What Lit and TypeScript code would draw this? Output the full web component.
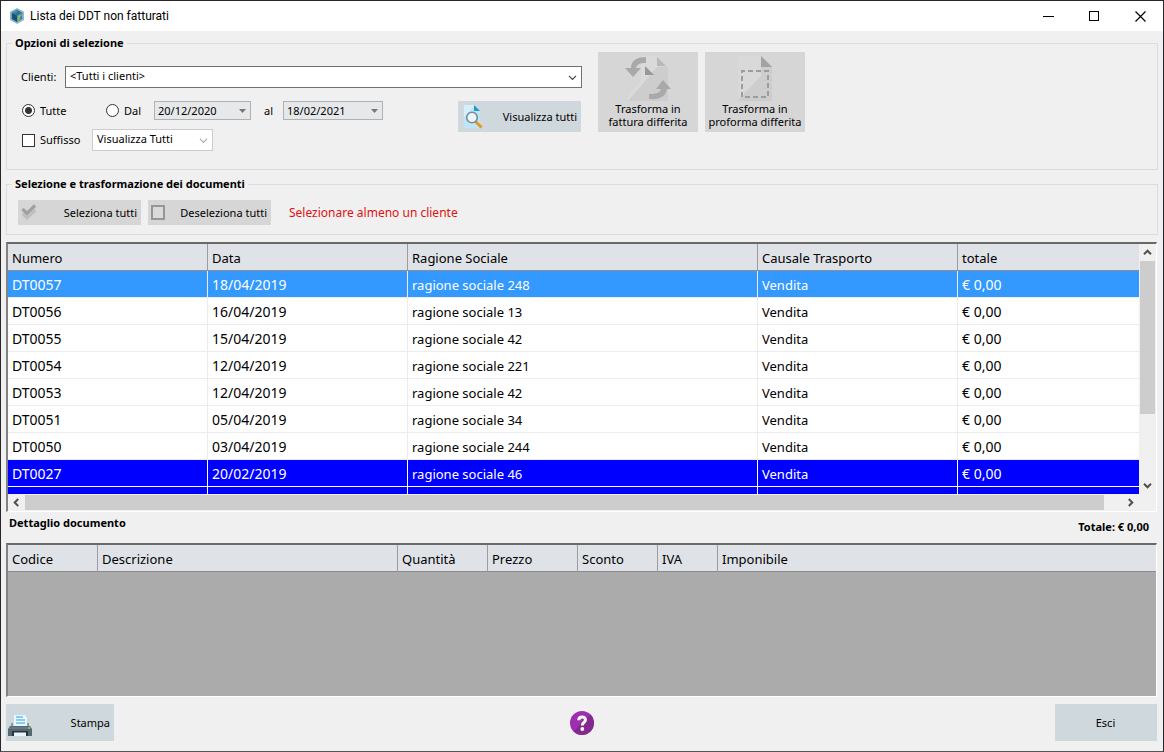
import { LitElement, html, css, svg } from "lit";
import { customElement, property } from "lit/decorators.js";
import { classMap } from "lit/directives/class-map.js";

interface Ddt {
  numero: string;
  data: string;
  ragione: string;
  state?: "current" | "marked";
}

const DOCUMENTS: Ddt[] = [
  { numero: "DT0057", data: "18/04/2019", ragione: "ragione sociale 248", state: "current" },
  { numero: "DT0056", data: "16/04/2019", ragione: "ragione sociale 13" },
  { numero: "DT0055", data: "15/04/2019", ragione: "ragione sociale 42" },
  { numero: "DT0054", data: "12/04/2019", ragione: "ragione sociale 221" },
  { numero: "DT0053", data: "12/04/2019", ragione: "ragione sociale 42" },
  { numero: "DT0051", data: "05/04/2019", ragione: "ragione sociale 34" },
  { numero: "DT0050", data: "03/04/2019", ragione: "ragione sociale 244" },
  { numero: "DT0027", data: "20/02/2019", ragione: "ragione sociale 46", state: "marked" },
];

const chevron = (d: string, color = "#505050", width = 2) => svg`
  <svg width="9" height="9" viewBox="0 0 9 9" fill="none" aria-hidden="true">
    <path d=${d} stroke=${color} stroke-width=${width} />
  </svg>`;

const UP = "M1 6.2 4.5 2.7 8 6.2";
const DOWN = "M1 2.8 4.5 6.3 8 2.8";
const LEFT = "M6.2 1 2.7 4.5 6.2 8";
const RIGHT = "M2.8 1 6.3 4.5 2.8 8";

const appIcon = svg`
  <svg width="14" height="16" viewBox="0 0 14 16" aria-hidden="true">
    <path d="M7 0 14 3.8V12L7 16 0 12V3.8Z" fill="#8fb9c4" />
    <path d="M7 1.8 12.2 4.7 7 7.6 1.8 4.7Z" fill="#2d6f9a" />
    <path d="M1.8 4.7 7 7.6V14L1.8 11Z" fill="#17507d" />
    <path d="M12.2 4.7 7 7.6V14L12.2 11Z" fill="#3b86a5" />
    <path d="M7.6 8.2 11.4 6.2V8L9.6 9V12L7.6 13Z" fill="#a5b95a" />
    <path d="M3 3.8 7 2 8 4 4 6Z" fill="#3f8fb5" />
  </svg>`;

const searchIcon = svg`
  <svg width="20" height="24" viewBox="0 0 20 24" aria-hidden="true">
    <path d="M1 0H11L17 6V23H1Z" fill="#bfe6f8" />
    <path d="M1 23V12L11 1V0H1Z" fill="#d3f0fb" />
    <path d="M11 0 17 6H11Z" fill="#1f9dc4" />
    <path d="m12.5 16.5 6 6" stroke="#e39a20" stroke-width="3" />
    <circle cx="9" cy="12.500" r="5.300" fill="#eaf6fb" stroke="#7a8b95" stroke-width="1.600" />
  </svg>`;

const transformIcon = svg`
  <svg width="48" height="48" viewBox="0 0 48 48" aria-hidden="true">
    <path d="M17 2H33V13H44V47H4V42L17 28Z" fill="#cdcdcd" />
    <path d="M4 47V42L17 26V2H33V13Z" fill="#dadada" />
    <path d="M33 3 42 12H33Z" fill="#b8b8b8" />
    <path d="M21 12 30 21H21Z" fill="#989898" />
    <path d="M22 3C12 3 7 7 7 14H1L9 23 17 14H12C13 10 16 9 22 9Z" fill="#a9a9a9" />
    <path d="M25 45C36 46 42 42 43 35H47L39 26 32 35H37C36 39 32 40 25 40Z" fill="#a9a9a9" />
  </svg>`;

const proformaIcon = svg`
  <svg width="48" height="48" viewBox="0 0 48 48" aria-hidden="true">
    <path d="M7 2H30L41 13V47H7Z" fill="#cdcdcd" />
    <path d="M7 47V46L30 22V2H7Z" fill="#d9d9d9" />
    <path d="M30 2 41 13H30Z" fill="#a2a2a2" />
    <rect x="11" y="17" width="26" height="26" fill="none" stroke="#9c9c9c" stroke-width="2" stroke-dasharray="5 3" stroke-dashoffset="2" />
  </svg>`;

const checksIcon = svg`
  <svg width="16" height="17" viewBox="0 0 16 17" fill="none" aria-hidden="true">
    <path d="M1.500 9.500 6 14 14.500 6" stroke="#bebebe" stroke-width="3" />
    <path d="M1.500 5 6 9.500 14 1.500" stroke="#a0a0a0" stroke-width="3.200" />
  </svg>`;

const emptyBoxIcon = svg`
  <svg width="14" height="15" viewBox="0 0 14 15" aria-hidden="true">
    <rect x="1" y="1" width="12" height="13" fill="#dadada" stroke="#969696" stroke-width="2" />
  </svg>`;

const printerIcon = svg`
  <svg width="24" height="22" viewBox="0 0 24 22" aria-hidden="true">
    <path d="M6 0H17L19 3V13H6Z" fill="#e8f6fd" />
    <path d="M8 2H15M8 5H17M8 8H17" stroke="#6cc0e2" stroke-width="1.400" />
    <path d="M3 8H5V12H19V8H21V13H3Z" fill="#8b99a0" />
    <path d="M0 14 2 11H22L24 14V21H0Z" fill="#566872" />
    <path d="M1 13H23" stroke="#71828b" stroke-width="1.400" />
    <path d="M20 13H22" stroke="#93b94a" stroke-width="2" />
    <path d="M4 16H20V21H4Z" fill="#26343c" />
    <path d="M6 17.500H18V21H6Z" fill="#e9f5fa" />
  </svg>`;

const helpIcon = svg`
  <svg width="24" height="24" viewBox="0 0 24 24" aria-hidden="true">
    <circle cx="12" cy="12" r="12" fill="#9c2fae" />
    <path d="M20.500 3.500A12 12 0 0 1 3.500 20.500Z" fill="#84288f" />
    <path d="M8.700 9.200C8.700 4.900 15.500 5 15.500 8.800 15.500 11.500 12.300 11.500 12.300 14.500" fill="none" stroke="#fff" stroke-width="3" />
    <circle cx="12.300" cy="18" r="1.900" fill="#fff" />
  </svg>`;

@customElement("data-grid")
class DataGrid extends LitElement {
  @property({ type: Boolean, reflect: true }) scroll = false;

  static styles = css`
    :host {
      display: grid;
      grid-template: minmax(0, 1fr) / minmax(0, 1fr);
      box-sizing: border-box;
      min-height: 0;
      overflow: hidden;
      border: 1px solid #fff;
      border-top: 2px solid #696969;
      border-left: 2px solid #828282;
      background: #ababab;
    }
    :host([scroll]) {
      grid-template: minmax(0, 1fr) 17px / minmax(0, 1fr) 17px;
      background: #f0f0f0;
    }
    .view {
      overflow: hidden;
    }
    .bar {
      display: flex;
      background: #f0f0f0;
    }
    .vertical {
      flex-direction: column;
    }
    .arrow {
      flex: none;
      display: grid;
      place-items: center;
      width: 17px;
      height: 17px;
      padding: 0;
      border: 0;
      background: none;
    }
    .track {
      flex: 1;
    }
    .thumb {
      background: #cdcdcd;
    }
    .vertical .thumb {
      height: 71%;
      margin-left: 1px;
      margin-right: 1px;
    }
    .horizontal .thumb {
      height: 15px;
      margin-top: 1px;
      margin-right: 18px;
    }
  `;

  render() {
    return html`
      <div class="view"><slot></slot></div>
      ${this.scroll
        ? html`
            <div class="bar vertical">
              <button class="arrow" aria-label="Su">${chevron(UP)}</button>
              <div class="track"><div class="thumb"></div></div>
              <button class="arrow" aria-label="Giù">${chevron(DOWN)}</button>
            </div>
            <div class="bar horizontal">
              <button class="arrow" aria-label="Sinistra">${chevron(LEFT)}</button>
              <div class="track"><div class="thumb"></div></div>
              <button class="arrow" aria-label="Destra">${chevron(RIGHT)}</button>
            </div>
          `
        : ""}
    `;
  }
}

@customElement("app-root")
class AppRoot extends LitElement {
  static styles = css`
    :host {
      display: flex;
      flex-direction: column;
      box-sizing: border-box;
      height: 100vh;
      border: 1px solid #26262c;
      border-bottom-color: #555;
      background: #f0f0f0;
      color: #000;
      font: 11px/14px "Noto Sans", sans-serif;
    }
    button,
    select,
    input {
      font: inherit;
      color: inherit;
    }
    .titlebar {
      flex: none;
      display: flex;
      align-items: center;
      height: 30px;
      padding-left: 9px;
      background: #fff;
    }
    .title {
      flex: 1;
      margin: 0 0 0 6px;
      font: 12px/16px Roboto, sans-serif;
    }
    .caption {
      display: grid;
      place-items: center;
      width: 46px;
      height: 30px;
      padding: 0;
      border: 0;
      background: none;
    }
    .group {
      flex: none;
      box-sizing: border-box;
      margin: 5px 5px 0;
      padding: 0;
      border: 1px solid #dcdcdc;
      min-width: 0;
    }
    .group + .group {
      margin-top: 7px;
    }
    .group legend {
      margin-left: 5px;
      padding: 0 3px;
      font-weight: 700;
    }
    .options {
      display: flex;
      align-items: flex-start;
      gap: 7px;
      height: 117px;
      padding-top: 2px;
    }
    .filters {
      display: grid;
      gap: 13px;
      box-sizing: content-box;
      width: 561px;
      padding: 14px 9px 0 14px;
    }
    .client {
      display: flex;
      align-items: center;
    }
    .client label {
      width: 44px;
    }
    .combo {
      appearance: none;
      box-sizing: border-box;
      flex: 1;
      height: 22px;
      margin: 0;
      padding: 0 4px 2px;
      border: 1px solid #707070;
      border-radius: 0;
      background: #fff;
    }
    .stack {
      display: grid;
      align-items: center;
    }
    .stack > * {
      grid-area: 1 / 1;
    }
    .client .stack {
      flex: 1;
    }
    .stack svg {
      justify-self: end;
      margin-right: 5px;
      pointer-events: none;
    }
    .criteria {
      display: flex;
      justify-content: space-between;
      align-items: flex-start;
      padding: 0 1px;
    }
    .criteria-rows {
      display: grid;
      gap: 9px;
    }
    .row {
      display: flex;
      align-items: center;
    }
    .choice {
      display: flex;
      align-items: center;
      gap: 5px;
    }
    .choice input {
      appearance: none;
      box-sizing: border-box;
      flex: none;
      width: 13px;
      height: 13px;
      margin: 0;
      border: 1px solid #333;
      background: #fff;
    }
    .choice input[type="radio"] {
      border-radius: 50%;
    }
    .choice input[type="radio"]:checked {
      background: radial-gradient(circle, #333 3px, #fff 4px);
    }
    .all {
      width: 84px;
    }
    .from {
      width: 48px;
    }
    .date {
      box-sizing: border-box;
      width: 97px;
      height: 19px;
      margin: 0;
      padding: 0 3px;
      border: 1px solid #adb2b5;
      border-radius: 0;
      background: #e6e8ea;
    }
    .date-to {
      width: 100px;
    }
    .to {
      padding: 0 10px 0 13px;
    }
    .suffix {
      width: 70px;
    }
    .suffix-combo {
      width: 121px;
      border-color: #ccc;
    }
    .tool {
      display: flex;
      align-items: center;
      justify-content: space-between;
      box-sizing: border-box;
      width: 123px;
      height: 25px;
      padding: 0 4px 0 3px;
      border: 0;
      background: #d6d6d6;
    }
    .view-all {
      height: 31px;
      padding-left: 5px;
    }
    .active {
      background: #cfd8dc;
    }
    .big {
      display: flex;
      flex-direction: column;
      align-items: center;
      width: 100px;
      height: 80px;
      padding: 2px 0 0;
      border: 0;
      background: #d6d6d6;
      line-height: 13px;
    }
    .selection {
      display: flex;
      align-items: center;
      gap: 7px;
      height: 43px;
      padding-left: 11px;
    }
    .warning {
      margin: 0 0 0 11px;
      color: #e01010;
      font-size: 12px;
    }
    .documents {
      flex: 271 1 0;
      margin: 7px 6px 0 5px;
    }
    .detail-head {
      flex: none;
      display: flex;
      justify-content: space-between;
      align-items: center;
      height: 31px;
      padding: 0 14px 0 8px;
      font-weight: 700;
    }
    .heading {
      margin: 0 0 8px;
      font: inherit;
    }
    .detail {
      flex: 154 1 0;
      margin: 0 6px 0 5px;
    }
    table {
      width: 100%;
      table-layout: fixed;
      border-collapse: separate;
      border-spacing: 0;
      font-size: 13px;
      line-height: 18px;
    }
    th,
    td {
      box-sizing: border-box;
      height: 27px;
      padding: 2px 4px 0;
      overflow: hidden;
      text-align: left;
      white-space: nowrap;
      font-weight: 400;
      border-right: 1px solid #ececec;
      border-bottom: 1px solid #ececec;
    }
    th {
      background: #dfe3e8;
      border-right-color: #9a9ea3;
      border-bottom-color: #8c8c8c;
    }
    th:last-child,
    td:last-child {
      border-right: 0;
    }
    td {
      background: #fff;
    }
    .figure {
      font-size: 14px;
    }
    .current td {
      background: #3399ff;
      color: #fff;
    }
    .marked td {
      background: #0000ff;
      color: #fff;
      border-color: #fff;
    }
    .w-code,
    .w-num {
      width: 90px;
    }
    .w-desc {
      width: 300px;
    }
    .w-discount {
      width: 80px;
    }
    .w-vat {
      width: 60px;
    }
    .w-text {
      width: 200px;
    }
    .w-name {
      width: 350px;
    }
    .footer {
      flex: none;
      display: grid;
      grid-template-columns: 1fr auto 1fr;
      align-items: center;
      padding: 7px 6px 10px 5px;
    }
    .print {
      width: 108px;
      height: 37px;
      padding: 0 4px 0 2px;
    }
    .print svg {
      margin-top: 6px;
    }
    .help {
      display: flex;
      padding: 0;
      border: 0;
      background: none;
    }
    .exit {
      justify-self: end;
      justify-content: center;
      width: 102px;
      height: 37px;
    }
  `;

  private documentRow(d: Ddt) {
    const classes = classMap({ current: d.state === "current", marked: d.state === "marked" });
    return html`<tr class=${classes}>
      <td class="figure">${d.numero}</td>
      <td class="figure">${d.data}</td>
      <td>${d.ragione}</td>
      <td>Vendita</td>
      <td class="figure">€ 0,00</td>
    </tr>`;
  }

  render() {
    return html`
      <header class="titlebar">
        ${appIcon}
        <h1 class="title">Lista dei DDT non fatturati</h1>
        <button class="caption" aria-label="Riduci a icona">
          <svg width="11" height="11"><path d="M0 5.500H11" stroke="#000" /></svg>
        </button>
        <button class="caption" aria-label="Ingrandisci">
          <svg width="11" height="11"><rect x=".5" y=".5" width="9" height="9" fill="none" stroke="#000" /></svg>
        </button>
        <button class="caption" aria-label="Chiudi">
          <svg width="11" height="11"><path d="M.5.500 10.500 10.500M10.500.500.500 10.500" stroke="#000" stroke-width="1.200" /></svg>
        </button>
      </header>

      <fieldset class="group">
        <legend>Opzioni di selezione</legend>
        <div class="options">
          <div class="filters">
            <div class="client">
              <label for="client">Clienti:</label>
              <div class="stack">
                <select class="combo" id="client"><option>&lt;Tutti i clienti&gt;</option></select>
                ${chevron(DOWN, "#444", 1.2)}
              </div>
            </div>
            <div class="criteria">
              <div class="criteria-rows">
                <div class="row">
                  <label class="choice all"><input type="radio" name="period" checked />Tutte</label>
                  <label class="choice from"><input type="radio" name="period" />Dal</label>
                  <div class="stack">
                    <input class="date" type="text" aria-label="Dal" value="20/12/2020" />
                    <svg width="7" height="4"><path d="M0 0H7L3.500 4Z" fill="#777" /></svg>
                  </div>
                  <label class="to" for="date-to">al</label>
                  <div class="stack">
                    <input class="date date-to" type="text" id="date-to" value="18/02/2021" />
                    <svg width="7" height="4"><path d="M0 0H7L3.500 4Z" fill="#777" /></svg>
                  </div>
                </div>
                <div class="row">
                  <label class="choice suffix"><input type="checkbox" />Suffisso</label>
                  <div class="stack">
                    <select class="combo suffix-combo" aria-label="Suffisso"><option>Visualizza Tutti</option></select>
                    ${chevron(DOWN, "#aaa", 1.2)}
                  </div>
                </div>
              </div>
              <button class="tool view-all active">${searchIcon}<span>Visualizza tutti</span></button>
            </div>
          </div>
          <button class="big">${transformIcon}<span>Trasforma in<br />fattura differita</span></button>
          <button class="big">${proformaIcon}<span>Trasforma in<br />proforma differita</span></button>
        </div>
      </fieldset>

      <fieldset class="group">
        <legend>Selezione e trasformazione dei documenti</legend>
        <div class="selection">
          <button class="tool">${checksIcon}<span>Seleziona tutti</span></button>
          <button class="tool">${emptyBoxIcon}<span>Deseleziona tutti</span></button>
          <p class="warning">Selezionare almeno un cliente</p>
        </div>
      </fieldset>

      <data-grid class="documents" scroll>
        <table>
          <thead>
            <tr>
              <th class="w-text">Numero</th>
              <th class="w-text">Data</th>
              <th class="w-name">Ragione Sociale</th>
              <th class="w-text">Causale Trasporto</th>
              <th>totale</th>
            </tr>
          </thead>
          <tbody>
            ${DOCUMENTS.map((d) => this.documentRow(d))}
            <tr class="marked"><td></td><td></td><td></td><td></td><td></td></tr>
          </tbody>
        </table>
      </data-grid>

      <div class="detail-head">
        <h2 class="heading">Dettaglio documento</h2>
        <span>Totale: € 0,00</span>
      </div>

      <data-grid class="detail">
        <table>
          <thead>
            <tr>
              <th class="w-code">Codice</th>
              <th class="w-desc">Descrizione</th>
              <th class="w-num">Quantità</th>
              <th class="w-num">Prezzo</th>
              <th class="w-discount">Sconto</th>
              <th class="w-vat">IVA</th>
              <th>Imponibile</th>
            </tr>
          </thead>
        </table>
      </data-grid>

      <footer class="footer">
        <button class="tool print active">${printerIcon}<span>Stampa</span></button>
        <button class="help" aria-label="Aiuto">${helpIcon}</button>
        <button class="tool exit active">Esci</button>
      </footer>
    `;
  }
}
